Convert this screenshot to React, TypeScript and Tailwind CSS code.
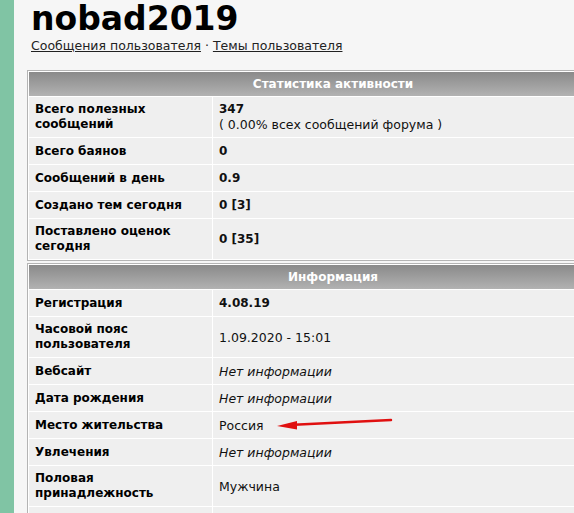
import React from 'react';

type Row = { label: string[]; value: React.ReactNode; tall?: boolean };

const statRows: Row[] = [
    {
        label: ['Всего полезных', 'сообщений'],
        value: (
            <div>
                <div className="font-bold text-[12px]">347</div>
                <div>( 0.00% всех сообщений форума )</div>
            </div>
        ),
        tall: true,
    },
    { label: ['Всего баянов'], value: <span className="font-bold text-[12px]">0</span> },
    { label: ['Сообщений в день'], value: <span className="font-bold text-[12px]">0.9</span> },
    { label: ['Создано тем сегодня'], value: <span className="font-bold text-[12px]">0 [3]</span> },
    { label: ['Поставлено оценок', 'сегодня'], value: <span className="font-bold text-[12px]">0 [35]</span>, tall: true },
];

const noInfo = <span className="italic">Нет информации</span>;

const infoRows: Row[] = [
    { label: ['Регистрация'], value: <span className="font-bold text-[12px]">4.08.19</span> },
    { label: ['Часовой пояс', 'пользователя'], value: '1.09.2020 - 15:01', tall: true },
    { label: ['Вебсайт'], value: noInfo },
    { label: ['Дата рождения'], value: noInfo },
    { label: ['Место жительства'], value: 'Россия' },
    { label: ['Увлечения'], value: noInfo },
    { label: ['Половая', 'принадлежность'], value: 'Мужчина', tall: true },
    { label: [''], value: '' },
];

const StatTable: React.FC<{ title: string; rows: Row[] }> = ({ title, rows }) => (
    <div className="w-[612px] border border-[#b4b4b4] bg-white p-px">
        <div className="h-6 flex items-center justify-center bg-gradient-to-b from-[#8a8a8a] to-[#b2b2b2] text-white font-bold text-[12px]">
            {title}
        </div>
        <div className="grid grid-cols-[183px_1fr] gap-px mt-px">
            {rows.map((r, i) => (
                <React.Fragment key={i}>
                    <div className={`bg-[#efefef] px-1.5 flex flex-col justify-center font-bold text-[12px] text-black leading-[15px] ${r.tall ? 'h-10' : 'h-[26px]'}`}>
                        {r.label.map((l, j) => (
                            <div key={j}>{l}</div>
                        ))}
                    </div>
                    <div className="bg-[#efefef] px-1.5 flex items-center text-[#111] leading-[15px]">{r.value}</div>
                </React.Fragment>
            ))}
        </div>
    </div>
);

export default function App() {
    return (
        <div className="w-[574px] h-[513px] overflow-hidden flex bg-[#f6f6f6] text-[12.5px]" style={{ fontFamily: '"DejaVu Sans", Verdana, sans-serif' }}>
            <div className="w-[14px] shrink-0 bg-[#80c4a4]" />
            <div className="relative pl-[13px] shrink-0">
                <h1 className="pl-[4px] text-[33px] leading-[38px] font-bold text-black">nobad2019</h1>
                <div className="pl-[4px] text-[#222] leading-[15px]">
                    <span className="underline">Сообщения пользователя</span> · <span className="underline">Темы пользователя</span>
                </div>
                <div className="mt-[17px] flex flex-col gap-[2px]">
                    <StatTable title="Статистика активности" rows={statRows} />
                    <StatTable title="Информация" rows={infoRows} />
                </div>
                <svg className="absolute left-[237px] top-[410px]" width="150" height="24" viewBox="0 0 150 24">
                    <line x1="140" y1="10" x2="38" y2="15" stroke="#e01010" strokeWidth="2.5" strokeLinecap="round" />
                    <polygon points="26,16 46,11 46,19.5" fill="#e01010" />
                </svg>
            </div>
        </div>
    );
}
